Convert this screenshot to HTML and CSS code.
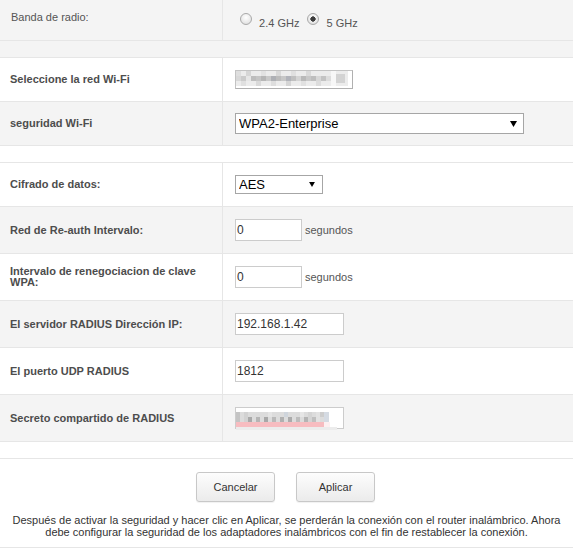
FILE: index.html
```html
<!DOCTYPE html>
<html lang="es">
<head>
<meta charset="utf-8">
<title>Seguridad Wi-Fi</title>
<link rel="stylesheet" href="styles.css">
</head>
<body>
<div class="form">
  <div class="row first alt">
    <div class="label plain">Banda de radio:</div>
    <div class="value radios">
      <input type="radio" name="band" class="radio"> 2.4 GHz <input type="radio" name="band" class="radio" checked> 5 GHz
    </div>
  </div>
  <div class="spacer alt"></div>

  <div class="row short">
    <div class="label">Seleccione la red Wi-Fi</div>
    <div class="value">
      <span class="masked">
        <input type="text" class="text ssid" value="">
        <svg class="mosaic ssid-mosaic" width="112" height="15" viewBox="0 0 112 15" aria-hidden="true">
          <rect width="112" height="15" fill="#ececec"/>
          <rect x="0" y="0" width="5" height="5" fill="#dedede"/><rect x="10" y="0" width="5" height="5" fill="#d6d6d6"/>
          <rect x="25" y="0" width="5" height="5" fill="#e2e2e2"/><rect x="40" y="0" width="5" height="5" fill="#d9d9d9"/>
          <rect x="55" y="0" width="5" height="5" fill="#e0e0e0"/><rect x="70" y="0" width="5" height="5" fill="#dadada"/>
          <rect x="0" y="5" width="5" height="5" fill="#d8d8d8"/><rect x="5" y="5" width="5" height="5" fill="#cbcbcb"/>
          <rect x="10" y="5" width="5" height="5" fill="#e6e6e6"/><rect x="15" y="5" width="5" height="5" fill="#bdbdbd"/>
          <rect x="20" y="5" width="5" height="5" fill="#c5c5c5"/><rect x="25" y="5" width="5" height="5" fill="#b6b6b6"/>
          <rect x="30" y="5" width="5" height="5" fill="#c9c9c9"/><rect x="35" y="5" width="5" height="5" fill="#aeb0b5"/>
          <rect x="40" y="5" width="5" height="5" fill="#bcbcbc"/><rect x="45" y="5" width="5" height="5" fill="#c7c7c7"/>
          <rect x="50" y="5" width="5" height="5" fill="#b1b3ba"/><rect x="55" y="5" width="5" height="5" fill="#c0c0c0"/>
          <rect x="60" y="5" width="5" height="5" fill="#d4d4d4"/><rect x="65" y="5" width="5" height="5" fill="#b9b9b9"/>
          <rect x="70" y="5" width="5" height="5" fill="#c8c8c8"/><rect x="75" y="5" width="5" height="5" fill="#bebebe"/>
          <rect x="80" y="5" width="5" height="5" fill="#d7d7d7"/><rect x="85" y="5" width="5" height="5" fill="#c3c3c3"/>
          <rect x="90" y="5" width="5" height="5" fill="#dcdcdc"/><rect x="95" y="0" width="5" height="15" fill="#f7f7f7"/>
          <rect x="100" y="3" width="9" height="9" fill="#d3d3d3"/>
          <rect x="5" y="10" width="5" height="5" fill="#e0e0e0"/><rect x="20" y="10" width="5" height="5" fill="#d9d9d9"/>
          <rect x="35" y="10" width="5" height="5" fill="#dedede"/><rect x="50" y="10" width="5" height="5" fill="#d5d5d5"/>
          <rect x="65" y="10" width="5" height="5" fill="#e1e1e1"/><rect x="80" y="10" width="5" height="5" fill="#dcdcdc"/>
        </svg>
      </span>
    </div>
  </div>
  <div class="row short alt">
    <div class="label">seguridad Wi-Fi</div>
    <div class="value">
      <select class="select select-wide"><option>WPA2-Enterprise</option></select>
    </div>
  </div>
  <div class="spacer"></div>

  <div class="row short">
    <div class="label">Cifrado de datos:</div>
    <div class="value">
      <select class="select select-aes"><option>AES</option></select>
    </div>
  </div>
  <div class="row tall alt">
    <div class="label">Red de Re-auth Intervalo:</div>
    <div class="value">
      <input type="text" class="text w-sm" value="0"><span class="unit">segundos</span>
    </div>
  </div>
  <div class="row tall">
    <div class="label">Intervalo de renegociacion de clave WPA:</div>
    <div class="value">
      <input type="text" class="text w-sm" value="0"><span class="unit">segundos</span>
    </div>
  </div>
  <div class="row tall alt">
    <div class="label">El servidor RADIUS Dirección IP:</div>
    <div class="value">
      <input type="text" class="text w-md" value="192.168.1.42">
    </div>
  </div>
  <div class="row tall">
    <div class="label">El puerto UDP RADIUS</div>
    <div class="value">
      <input type="text" class="text w-md" value="1812">
    </div>
  </div>
  <div class="row tall alt">
    <div class="label">Secreto compartido de RADIUS</div>
    <div class="value">
      <span class="masked">
        <input type="text" class="text w-md" value="">
        <svg class="mosaic secret-mosaic" width="102" height="18" viewBox="0 0 102 18" aria-hidden="true">
          <rect x="0" y="0" width="93" height="10" fill="#dcdcdc"/>
          <rect x="0" y="0" width="4" height="10" fill="#c4c4c4"/><rect x="8" y="0" width="4" height="10" fill="#d2d2d2"/>
          <rect x="12" y="5" width="4" height="5" fill="#a9a9a9"/><rect x="20" y="5" width="4" height="5" fill="#b5b5b5"/>
          <rect x="28" y="5" width="4" height="5" fill="#a8a8a8"/><rect x="32" y="0" width="4" height="5" fill="#e4e4e4"/>
          <rect x="36" y="5" width="4" height="5" fill="#b9b9b9"/><rect x="44" y="5" width="4" height="5" fill="#b0b0b0"/>
          <rect x="48" y="0" width="4" height="5" fill="#cfd5dc"/><rect x="52" y="5" width="4" height="5" fill="#ababab"/>
          <rect x="60" y="5" width="4" height="5" fill="#bcbcbc"/><rect x="64" y="0" width="4" height="5" fill="#e6e6e6"/>
          <rect x="68" y="5" width="4" height="5" fill="#b4b4b4"/><rect x="72" y="0" width="4" height="10" fill="#d4d4d4"/>
          <rect x="76" y="5" width="4" height="5" fill="#bfbfbf"/><rect x="80" y="0" width="4" height="10" fill="#e2e2e2"/>
          <rect x="84" y="0" width="4" height="5" fill="#cdcdcd"/><rect x="88" y="0" width="5" height="10" fill="#d5dbe3"/>
          <rect x="0" y="10" width="88" height="5" fill="#f7bcc0"/>
          <rect x="88" y="10" width="6" height="5" fill="#fdf0f1"/>
          <rect x="0" y="15" width="101" height="3" fill="#ececec"/>
        </svg>
      </span>
    </div>
  </div>
  <div class="spacer"></div>

  <div class="actions">
    <button type="button" class="btn">Cancelar</button>
    <button type="button" class="btn">Aplicar</button>
  </div>
  <p class="note">Después de activar la seguridad y hacer clic en Aplicar, se perderán la conexión con el router inalámbrico. Ahora<br>debe configurar la seguridad de los adaptadores inalámbricos con el fin de restablecer la conexión.</p>
</div>
</body>
</html>
```

FILE: styles.css
```css
body {
  margin: 0;
  background: #fff;
  font-family: "Liberation Sans", Arial, sans-serif;
  color: #4a4a4a;
}

.form {
  width: 573px;
}

.row {
  display: flex;
  box-sizing: border-box;
  border-bottom: 1px solid #e6e6e6;
}

.row.first {
  height: 41px;
}

.row.short {
  height: 44px;
}

.row.tall {
  height: 47px;
}

.alt {
  background: #f4f4f4;
}

.spacer {
  height: 17px;
  box-sizing: border-box;
  border-bottom: 1px solid #e6e6e6;
}

.label {
  width: 223px;
  flex: none;
  box-sizing: border-box;
  border-right: 1px solid #e6e6e6;
  padding: 0 8px 0 10px;
  display: flex;
  align-items: center;
  font-size: 11px;
  line-height: 11px;
  font-weight: bold;
  color: #4d4d4d;
}

.label.plain {
  align-items: flex-start;
  padding-top: 12px;
  padding-left: 11px;
  font-weight: normal;
  color: #555;
}

.value {
  flex: 1;
  padding-left: 12px;
  display: flex;
  align-items: center;
  font-size: 11px;
  color: #555;
}

.value.radios {
  display: block;
  padding-top: 13px;
  line-height: 13px;
}

.radio {
  appearance: none;
  -webkit-appearance: none;
  display: inline-block;
  box-sizing: border-box;
  width: 12px;
  height: 12px;
  margin: 0 4px 0 5px;
  vertical-align: 2px;
  border: 1px solid #a9a9a9;
  border-radius: 50%;
  background: radial-gradient(circle at 50% 35%, #ffffff 0%, #e9e9e9 60%, #d6d6d6 100%);
}

.radio:checked {
  background:
    radial-gradient(circle, #3c3c3c 0, #3c3c3c 2.4px, transparent 2.9px),
    radial-gradient(circle at 50% 35%, #ffffff 0%, #e9e9e9 60%, #d6d6d6 100%);
}

.text {
  box-sizing: border-box;
  height: 22px;
  margin: 0;
  padding: 0 1px;
  border: 1px solid #cccccc;
  border-radius: 0;
  background: #fff;
  font-family: "Liberation Sans", Arial, sans-serif;
  font-size: 12px;
  color: #333;
  outline: none;
}

.w-sm {
  width: 67px;
}

.w-md {
  width: 109px;
}

.ssid {
  width: 118px;
  height: 19px;
  border-color: #c3c3c3 #b0b0b0 #b0b0b0 #c3c3c3;
}

.unit {
  margin-left: 3px;
}

.masked {
  position: relative;
  display: inline-block;
  line-height: 0;
}

.mosaic {
  position: absolute;
  display: block;
}

.ssid-mosaic {
  left: 1px;
  top: 1px;
}

.secret-mosaic {
  left: 1px;
  top: 5px;
}

.select {
  appearance: none;
  -webkit-appearance: none;
  box-sizing: border-box;
  margin: 0;
  padding: 0 16px 0 3px;
  border: 1px solid #a6a6a6;
  border-radius: 0;
  background: #fff url("data:image/svg+xml;utf8,<svg xmlns='http://www.w3.org/2000/svg' width='7' height='6' viewBox='0 0 7 6'><path d='M0 0H7L3.5 6Z' fill='black'/></svg>") no-repeat right 6px center;
  font-family: "Liberation Sans", Arial, sans-serif;
  font-size: 13px;
  color: #000;
}

.select-wide {
  width: 289px;
  height: 21px;
}

.select-aes {
  width: 88px;
  height: 19px;
  background-size: 6px 5px;
  background-position: right 7px center;
}

.actions {
  display: flex;
  justify-content: center;
  gap: 21px;
  padding: 13px 2px 0 0;
}

.btn {
  box-sizing: border-box;
  width: 79px;
  height: 30px;
  margin: 0;
  padding: 0;
  border: 1px solid #c8c8c8;
  border-radius: 3px;
  background: linear-gradient(#fdfdfd, #ebebeb);
  box-shadow: 0 1px 1px rgba(0, 0, 0, 0.06);
  font-family: "Liberation Sans", Arial, sans-serif;
  font-size: 11px;
  color: #333;
}

.note {
  margin: 12px 0 0;
  padding: 0 0 9px;
  border-bottom: 1px solid #e6e6e6;
  font-size: 11px;
  line-height: 12px;
  white-space: nowrap;
  text-align: center;
  color: #333;
}
```
